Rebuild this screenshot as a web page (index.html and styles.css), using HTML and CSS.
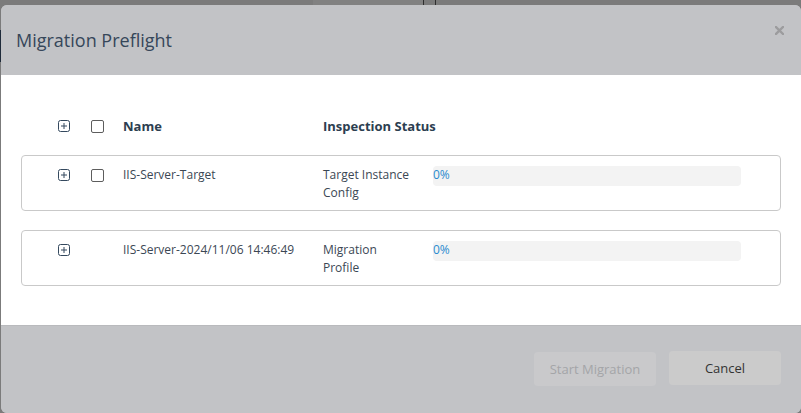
FILE: index.html
```html
<!DOCTYPE html>
<html>
<head>
<meta charset="utf-8">
<link rel="stylesheet" href="styles.css">
</head>
<body>
<div class="backdrop">
  <div class="bg-strip"><span class="bg-panel"></span><span class="bg-line l1"></span><span class="bg-line l2"></span></div>
  <span class="bg-edge"></span>
  <div class="dialog">
    <div class="dialog-header">
      <h1 class="dialog-title">Migration Preflight</h1>
      <button class="close-btn" aria-label="Close">
        <svg width="9" height="9" viewBox="0 0 9 9"><path d="M1 1L8 8M8 1L1 8" stroke="#9c9c9e" stroke-width="2.4" stroke-linecap="square"/></svg>
      </button>
    </div>
    <div class="dialog-body">
      <div class="row head-row">
        <div class="cell expand"><svg class="plus" width="12" height="12" viewBox="0 0 12 12"><rect x="0.5" y="0.5" width="11" height="11" rx="2" fill="none" stroke="#34495e"/><path d="M6 3V9M3 6H9" stroke="#34495e" stroke-width="1"/></svg></div>
        <div class="cell"><span class="check"></span></div>
        <div class="cell th">Name</div>
        <div class="cell th status-head">Inspection Status</div>
      </div>
      <div class="row card">
        <div class="cell expand"><svg class="plus" width="12" height="12" viewBox="0 0 12 12"><rect x="0.5" y="0.5" width="11" height="11" rx="2" fill="none" stroke="#34495e"/><path d="M6 3V9M3 6H9" stroke="#34495e" stroke-width="1"/></svg></div>
        <div class="cell"><span class="check"></span></div>
        <div class="cell td">IIS-Server-Target</div>
        <div class="cell td status">Target Instance Config</div>
        <div class="cell"><div class="progress"><span class="pct">0%</span></div></div>
      </div>
      <div class="row card">
        <div class="cell expand"><svg class="plus" width="12" height="12" viewBox="0 0 12 12"><rect x="0.5" y="0.5" width="11" height="11" rx="2" fill="none" stroke="#34495e"/><path d="M6 3V9M3 6H9" stroke="#34495e" stroke-width="1"/></svg></div>
        <div class="cell"></div>
        <div class="cell td">IIS-Server-2024/11/06 14:46:49</div>
        <div class="cell td status">Migration Profile</div>
        <div class="cell"><div class="progress"><span class="pct">0%</span></div></div>
      </div>
    </div>
    <div class="dialog-footer">
      <button class="btn btn-disabled" disabled>Start Migration</button>
      <button class="btn btn-cancel">Cancel</button>
    </div>
  </div>
</div>
</body>
</html>
```
FILE: styles.css
```css
* { box-sizing: border-box; }
html, body { margin: 0; padding: 0; }
body {
  background: #7b7b7b;
  font-family: "Open Sans", "Liberation Sans", sans-serif;
  width: 801px;
  height: 413px;
  overflow: hidden;
}
.backdrop {
  position: relative;
  width: 801px;
  height: 413px;
  padding: 5px 0 0 1px;
}
.bg-strip {
  position: absolute;
  left: 0; top: 0;
  width: 801px; height: 5px;
}
.bg-panel {
  position: absolute;
  left: 313px; top: 0;
  width: 110px; height: 5px;
  background: #818181;
}
.bg-line {
  position: absolute;
  top: 0; width: 1px; height: 5px;
  background: #2e2e2e;
}
.l1 { left: 423px; }
.l2 { left: 435px; }
.bg-edge {
  position: absolute;
  left: 0; top: 30px;
  width: 2px; height: 32px;
  background: #1f2b3a;
}
.dialog {
  position: relative;
  width: 800px;
  height: 408px;
  border-radius: 6px;
  overflow: hidden;
  display: flex;
  flex-direction: column;
  background: #c2c3c6;
}
.dialog-header {
  height: 70px;
  flex: none;
  background: #c2c3c6;
  display: flex;
  align-items: center;
  justify-content: space-between;
  padding: 0 17px 0 15px;
}
.dialog-title {
  margin: 0;
  font-size: 18px;
  font-weight: 400;
  color: #36475a;
}
.close-btn {
  border: none;
  background: none;
  padding: 0;
  width: 9px;
  height: 9px;
  align-self: flex-start;
  margin-top: 21px;
  display: block;
}
.close-btn svg { display: block; }
.dialog-body {
  height: 250px;
  flex: none;
  background: #ffffff;
  padding: 40px 20px 0 20px;
  display: flex;
  flex-direction: column;
  gap: 19px;
}
.row {
  display: grid;
  grid-template-columns: 69px 32px 200px 110px 308px 1fr;
  border: 1px solid transparent;
}
.head-row {
  height: 22px;
  align-items: center;
  margin-bottom: -1px;
}
.status-head {
  grid-column: 4 / 6;
  white-space: nowrap;
}
.card {
  height: 56px;
  border: 1px solid #c9c9c9;
  border-radius: 4px;
  padding-top: 10px;
  align-items: start;
}
.cell { display: flex; align-items: flex-start; }
.head-row .cell { align-items: center; }
.expand { padding-left: 36px; }
.card .expand, .card .cell:nth-child(2) { padding-top: 3px; }
.plus { display: block; }
.check {
  display: block;
  width: 13px;
  height: 13px;
  border: 1px solid #5d5d5d;
  border-radius: 2px;
  background: #fff;
}
.th {
  font-size: 13px;
  font-weight: 700;
  color: #2c3e50;
}
.td {
  font-size: 12px;
  line-height: 18px;
  color: #3b4754;
  padding-right: 8px;
}
.td.status { padding-right: 20px; }
.progress {
  width: 308px;
  height: 20px;
  background: #f3f3f3;
  border-radius: 4px;
}
.pct {
  display: block;
  font-size: 12px;
  line-height: 18px;
  color: #2a8bd0;
}
.dialog-footer {
  flex: 1;
  background: #c2c3c6;
  border-top: 1px solid #b9babd;
  display: flex;
  align-items: center;
  justify-content: flex-end;
  gap: 13px;
  padding: 0 20px 4px 0;
}
.btn {
  height: 34px;
  border: none;
  border-radius: 4px;
  font-family: "Open Sans", "Liberation Sans", sans-serif;
  font-size: 13px;
  padding: 0;
}
.btn-disabled {
  width: 122px;
  background: #c9c9cb;
  color: #a4a5a8;
  margin-top: 2px;
}
.btn-cancel {
  width: 112px;
  background: #cbcbcb;
  color: #333;
}
```
